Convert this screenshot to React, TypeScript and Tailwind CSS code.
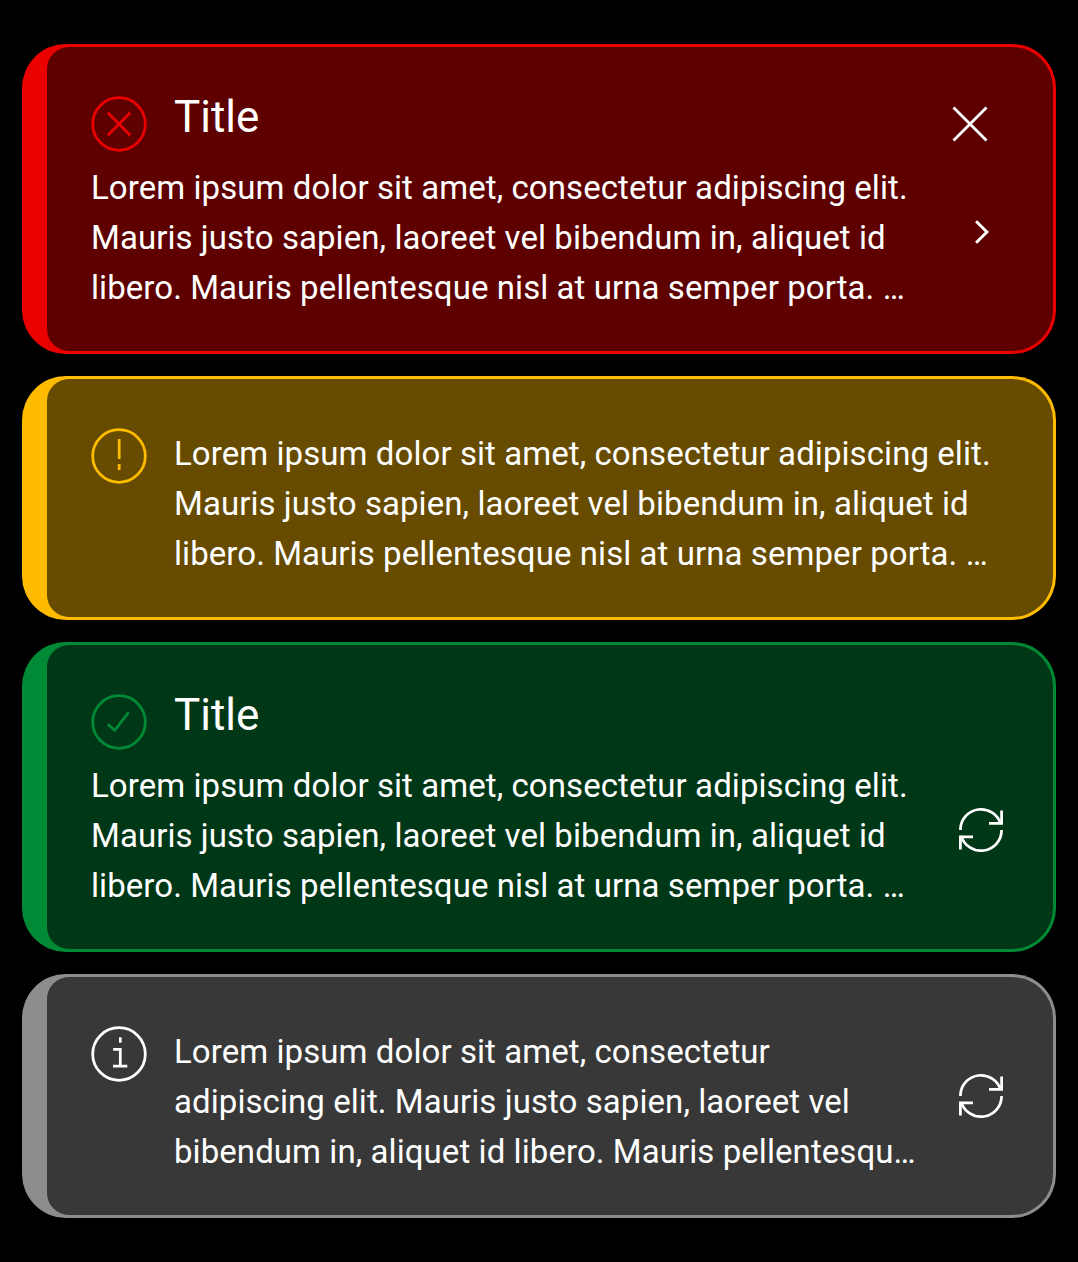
import type { ReactNode } from "react";

const stroke = { fill: "none", stroke: "currentColor", strokeWidth: 2.75 };

function StatusIcon({ children, className }: { children: ReactNode; className: string }) {
  return (
    <svg viewBox="0 0 56 56" className={`h-14 w-14 shrink-0 ${className}`} {...stroke}>
      <circle cx="28" cy="28" r="26.3" />
      {children}
    </svg>
  );
}

function ErrorIcon() {
  return (
    <StatusIcon className="text-[#eb0000]">
      <path d="M16.8 16.8L39.2 39.2M39.2 16.8L16.8 39.2" />
    </StatusIcon>
  );
}

function WarningIcon() {
  return (
    <StatusIcon className="text-[#ffbb00]">
      <path d="M28.2 11V31M28.2 36V42" />
    </StatusIcon>
  );
}

function SuccessIcon() {
  return (
    <StatusIcon className="text-[#008a35]">
      <path d="M16.8 30.2L23.8 36.2L37.6 18.4" />
    </StatusIcon>
  );
}

function InfoIcon() {
  return (
    <StatusIcon className="text-white">
      <path d="M29.3 11.2V16.8M22.2 23.4H29.3V40.2M22 40.2H36.3" />
    </StatusIcon>
  );
}

function CloseIcon() {
  return (
    <svg viewBox="0 0 36 36" className="h-9 w-9" {...stroke}>
      <path d="M1.5 1.5L34.5 34.5M34.5 1.5L1.5 34.5" />
    </svg>
  );
}

function ChevronIcon() {
  return (
    <svg viewBox="0 0 48 48" className="h-12 w-12" {...stroke} strokeWidth={3}>
      <path d="M24.1 13.2L34.9 24L24.1 34.8" />
    </svg>
  );
}

function RefreshIcon() {
  return (
    <svg viewBox="0 0 48 48" className="h-12 w-12" {...stroke}>
      <path d="M3.4 24A20.6 20.6 0 0 1 43.8 18.2" />
      <path d="M44.6 4.6V17.4H32" />
      <path d="M44.6 24A20.6 20.6 0 0 1 4.2 29.8" />
      <path d="M3.4 43.4V30.8H16" />
    </svg>
  );
}

function Card({ accent, surface, children }: { accent: string; surface: string; children: ReactNode }) {
  return (
    <section className={`rounded-[44px] py-[3px] pr-[3px] pl-[25px] ${accent}`}>
      <div className={`flex rounded-l-[22px] rounded-r-[41px] pl-11 ${surface}`}>{children}</div>
    </section>
  );
}

function Body({ lines }: { lines: string[] }) {
  return (
    <p className="text-[33px] leading-[50px] tracking-[0.07px] whitespace-nowrap">
      {lines.map((line) => (
        <span key={line} className="block">
          {line}
        </span>
      ))}
    </p>
  );
}

function Titled({ icon, title, lines }: { icon: ReactNode; title: string; lines: string[] }) {
  return (
    <div className="flex h-[304px] flex-1 flex-col pt-[49px]">
      <div className="flex gap-[27px]">
        {icon}
        <h2 className="mt-[-10px] text-[44px] leading-[62px]">{title}</h2>
      </div>
      <div className="mt-[11px]">
        <Body lines={lines} />
      </div>
    </div>
  );
}

function Untitled({ icon, lines }: { icon: ReactNode; lines: string[] }) {
  return (
    <div className="flex h-[238px] flex-1 gap-[27px] pt-[49px]">
      {icon}
      <div className="pt-px">
        <Body lines={lines} />
      </div>
    </div>
  );
}

const wide = [
  "Lorem ipsum dolor sit amet, consectetur adipiscing elit.",
  "Mauris justo sapien, laoreet vel bibendum in, aliquet id",
  "libero. Mauris pellentesque nisl at urna semper porta. …",
];

const narrow = [
  "Lorem ipsum dolor sit amet, consectetur",
  "adipiscing elit. Mauris justo sapien, laoreet vel",
  "bibendum in, aliquet id libero. Mauris pellentesqu…",
];

export default function App() {
  return (
    <main className="flex h-[1262px] w-[1078px] flex-col gap-[22px] bg-black px-[22px] pt-11 font-['Roboto',sans-serif] text-white">
      <Card accent="bg-[#eb0000]" surface="bg-[#5e0000]">
        <Titled icon={<ErrorIcon />} title="Title" lines={wide} />
        <div className="flex flex-col pt-[59px] pr-12">
          <button aria-label="Close" className="mr-[17px] self-end">
            <CloseIcon />
          </button>
          <button aria-label="Open" className="mt-[66px]">
            <ChevronIcon />
          </button>
        </div>
      </Card>
      <Card accent="bg-[#ffbb00]" surface="bg-[#664b00]">
        <Untitled icon={<WarningIcon />} lines={wide} />
      </Card>
      <Card accent="bg-[#008a35]" surface="bg-[#003717]">
        <Titled icon={<SuccessIcon />} title="Title" lines={wide} />
        <button aria-label="Refresh" className="mt-[161px] mr-12 self-start">
          <RefreshIcon />
        </button>
      </Card>
      <Card accent="bg-[#8d8d8d]" surface="bg-[#383838]">
        <Untitled icon={<InfoIcon />} lines={narrow} />
        <button aria-label="Refresh" className="mr-12 self-center">
          <RefreshIcon />
        </button>
      </Card>
    </main>
  );
}
